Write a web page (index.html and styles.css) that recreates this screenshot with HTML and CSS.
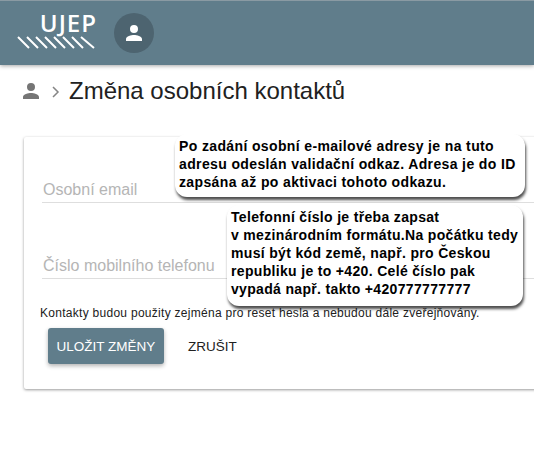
FILE: index.html
```html
<!DOCTYPE html>
<html lang="en">

<head>
    <meta charset="UTF-8">
    <title>Změna osobních kontaktů</title>
    <link rel="stylesheet" href="styles.css">
</head>

<body>
    <header class="topbar">
        <div class="logo">
            <span class="logo-text">UJEP</span>
            <svg class="logo-lines" width="80" height="13" viewBox="0 0 80 13">
                <path d="M1 1l11 11M10 1l11 11M19 1l11 11M28 1l11 11M37 1l11 11M46 1l11 11M55 1l11 11M64 1l13 11" stroke="#fff" stroke-width="2" fill="none" />
            </svg>
        </div>
        <div class="avatar">
            <svg width="24" height="24" viewBox="0 0 24 24">
                <path d="M12 12a4 4 0 1 0 0-8 4 4 0 0 0 0 8zm0 2c-2.700 0-8 1.300-8 4v2h16v-2c0-2.700-5.300-4-8-4z" fill="#fff" />
            </svg>
        </div>
    </header>

    <div class="crumbs">
        <svg width="24" height="24" viewBox="0 0 24 24">
            <path d="M12 12a4 4 0 1 0 0-8 4 4 0 0 0 0 8zm0 2c-2.700 0-8 1.300-8 4v2h16v-2c0-2.700-5.300-4-8-4z" fill="#757575" />
        </svg>
        <svg class="chevron" width="10" height="12" viewBox="0 0 10 12">
            <path d="M2 1l5 5-5 5" stroke="#858585" stroke-width="1.500" fill="none" />
        </svg>
        <h1>Změna osobních kontaktů</h1>
    </div>

    <div class="card">
        <div class="field">Osobní email</div>
        <div class="field">Číslo mobilního telefonu</div>
        <p class="note">Kontakty budou použity zejména pro reset hesla a nebudou dále zveřejňovány.</p>
        <div class="actions">
            <button class="btn-save">ULOŽIT ZMĚNY</button>
            <button class="btn-cancel">ZRUŠIT</button>
        </div>
    </div>

    <div class="bubble bubble-email">Po zadání osobní e-mailové adresy je na tuto adresu odeslán validační odkaz. Adresa je do ID zapsána až po aktivaci tohoto odkazu.</div>
    <div class="bubble bubble-phone">Telefonní číslo je třeba zapsat<br>v mezinárodním formátu.Na počátku tedy musí být kód země, např. pro Českou republiku je to +420. Celé číslo pak vypadá např. takto +420777777777</div>
</body>

</html>
```

FILE: styles.css
```css
html,
body {
    margin: 0;
    height: 472px;
    overflow: hidden;
    background-color: #fff;
    font-family: "Liberation Sans", Arial, sans-serif;
}

.topbar {
    display: flex;
    align-items: center;
    height: 64px;
    background-color: #607d8b;
    border-top: 1px solid #8a9aa3;
    box-shadow: 0 1px 4px rgba(0, 0, 0, 0.35);
}

.logo {
    display: flex;
    flex-direction: column;
    align-items: flex-end;
    width: 80px;
    margin: 0 0 5px 17px;
}

.logo-text {
    color: #fff;
    font-family: "Open Sans", sans-serif;
    font-size: 24px;
    font-weight: 600;
    line-height: 22px;
    letter-spacing: 1px;
}

.logo-lines {
    display: block;
    margin-top: 2px;
}

.avatar {
    display: flex;
    justify-content: center;
    align-items: center;
    width: 40px;
    height: 40px;
    margin-left: 17px;
    border-radius: 50%;
    background-color: #4d6470;
}

.crumbs {
    display: flex;
    align-items: center;
    height: 24px;
    margin: 14px 0 0 19px;
}

.chevron {
    margin: 2px 8px 0 8px;
}

h1 {
    margin: 0;
    color: #212121;
    font-size: 24px;
    font-weight: 400;
}

.card {
    box-sizing: border-box;
    width: 530px;
    height: 252px;
    margin: 34px 0 0 24px;
    padding-top: 40px;
    border-radius: 2px;
    background-color: #fff;
    box-shadow: 0 1px 3px rgba(0, 0, 0, 0.4);
}

.field {
    height: 25px;
    margin: 0 0 0 18px;
    padding-left: 1px;
    border-bottom: 1px solid #dedede;
    color: #b5b5b5;
    font-size: 16px;
    line-height: 26px;
}

.field + .field {
    margin-top: 50px;
}

.note {
    margin: 27px 0 0 16px;
    color: #212121;
    font-size: 12px;
    line-height: 14px;
    letter-spacing: 0.28px;
}

.actions {
    display: flex;
    align-items: center;
    margin: 8px 0 0 24px;
}

button {
    border: none;
    background: none;
    font-family: inherit;
    font-size: 13.500px;
}

.btn-save {
    width: 116px;
    height: 36px;
    border-radius: 3px;
    background-color: #607d8b;
    box-shadow: 0 2px 4px rgba(0, 0, 0, 0.3);
    color: #fff;
}

.btn-cancel {
    margin-left: 8px;
    padding: 0 16px;
    color: #212121;
}

.bubble {
    position: absolute;
    box-sizing: border-box;
    padding: 3px 2px 3px 4px;
    border-radius: 12px;
    background-color: #fff;
    box-shadow: 1px 3px 3px rgba(0, 0, 0, 0.7);
    color: #000;
    font-size: 14px;
    font-weight: 700;
    line-height: 18px;
}

.bubble-email {
    top: 134px;
    left: 175px;
    width: 350px;
    height: 63px;
    letter-spacing: 0.37px;
}

.bubble-phone {
    top: 205px;
    left: 227px;
    width: 296px;
    height: 101px;
    letter-spacing: 0.33px;
}
```
